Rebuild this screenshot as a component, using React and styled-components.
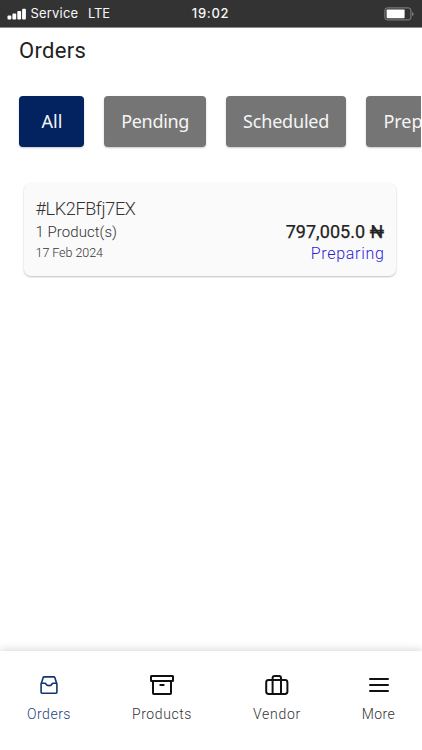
import React from "react";
import styled, { createGlobalStyle } from "styled-components";

const GlobalStyle = createGlobalStyle`
  * { box-sizing: border-box; }
  body { margin: 0; background: #fff; font-family: Roboto, "Noto Sans", sans-serif; }
`;

const Screen = styled.div`
  display: flex;
  flex-direction: column;
  width: 422px;
  height: 750px;
  overflow: hidden;
  background: #fff;
`;

const StatusBar = styled.header`
  display: grid;
  grid-template-columns: 1fr auto 1fr;
  align-items: center;
  flex: none;
  height: 28px;
  padding: 0 8px 0 7px;
  background: #333;
  border-bottom: 1px solid #8a8a8a;
  color: #f7f7f7;
  font: 500 13px/27px Inter, sans-serif;
`;

const Carrier = styled.div`
  display: flex;
  align-items: center;
  font-weight: 400;
  letter-spacing: 0.2px;
`;

const SignalIcon = styled.svg`
  width: 19px;
  height: 12px;
  margin-right: 4.5px;
`;

const Network = styled.span`
  margin-left: 9.5px;
  letter-spacing: -0.1px;
`;

const Clock = styled.div`
  letter-spacing: 0.7px;
`;

const BatteryIcon = styled.svg`
  justify-self: end;
  width: 30px;
  height: 14px;
`;

const Title = styled.h1`
  flex: none;
  margin: 9px 0 0 19px;
  color: #222;
  font-size: 22px;
  font-weight: 400;
  line-height: 28px;
  letter-spacing: 0.3px;
`;

const Filters = styled.div`
  display: flex;
  flex: none;
  gap: 20px;
  width: 421px;
  margin-top: 27px;
  padding: 4.4px 0 8px 19.4px;
  overflow: hidden;
`;

const Chip = styled.button`
  flex: none;
  width: ${(p) => p.$width}px;
  height: 51px;
  padding: 0 0 1px;
  border: 0;
  border-radius: 4px;
  background: ${(p) => (p.$active ? "#032360" : "#757575")};
  box-shadow: 0 1px 2px rgba(0, 0, 0, 0.22);
  color: #f5f5f5;
  font: 400 18px/26px "Noto Sans", sans-serif;
  letter-spacing: ${(p) => p.$spacing || 0}px;
`;

const OrderCard = styled.article`
  display: flex;
  justify-content: space-between;
  flex: none;
  width: 372.5px;
  height: 92.5px;
  margin: 28px 0 0 23.5px;
  padding: 13.6px 12px 0;
  border-radius: 7px;
  background: #fafafa;
  box-shadow: 0 1px 2px rgba(0, 0, 0, 0.25);
  color: #333;
`;

const Details = styled.div`
  display: flex;
  flex-direction: column;
`;

const OrderId = styled.div`
  font-size: 18px;
  font-weight: 300;
  line-height: 23px;
  letter-spacing: -0.35px;
`;

const ProductCount = styled.div`
  margin-top: 1px;
  font-size: 15px;
  font-weight: 300;
  line-height: 22px;
  letter-spacing: 0.05px;
`;

const OrderDate = styled.time`
  font-size: 12.5px;
  font-weight: 300;
  line-height: 20px;
  letter-spacing: -0.05px;
`;

const Summary = styled.div`
  display: flex;
  flex-direction: column;
  align-items: flex-end;
  padding-top: 23px;
`;

const Price = styled.div`
  color: #222;
  font-size: 18px;
  font-weight: 400;
  line-height: 23px;
  letter-spacing: 0.05px;
  -webkit-text-stroke: 0.25px #222;
`;

const Status = styled.div`
  margin-right: -0.6px;
  color: #2a1cd5;
  font-size: 16px;
  font-weight: 300;
  line-height: 22px;
  letter-spacing: 0.7px;
`;

const Navigation = styled.nav`
  display: flex;
  flex: none;
  height: 99.5px;
  margin-top: auto;
  padding-top: 21.5px;
  background: #fff;
  box-shadow: 0 -1px 8px rgba(0, 0, 0, 0.17);
`;

const NavItem = styled.a`
  display: flex;
  flex-direction: column;
  align-items: center;
  flex: none;
  width: ${(p) => p.$width}px;
  color: ${(p) => (p.$active ? "#123574" : "#111")};
`;

const NavIcon = styled.svg`
  width: 26px;
  height: 26px;
  fill: none;
  stroke: currentColor;
  stroke-width: ${(p) => p.$stroke || 2};
  stroke-linecap: round;
  stroke-linejoin: round;
`;

const NavLabel = styled.span`
  margin-top: 5px;
  color: ${(p) => (p.$active ? "#24427c" : "#333")};
  font-size: 14px;
  font-weight: 300;
  line-height: 22px;
  letter-spacing: ${(p) => p.$spacing}px;
`;

export default function App() {
  return (
    <>
      <GlobalStyle />
      <Screen>
        <StatusBar>
          <Carrier>
            <SignalIcon viewBox="0 0 19 12" fill="#fff">
              <rect x="0.5" y="7.5" width="3.8" height="4" rx="1" />
              <rect x="5.4" y="5.5" width="3.8" height="6" rx="1" />
              <rect x="10.3" y="3" width="3.8" height="8.5" rx="1" />
              <rect x="15.1" y="0.7" width="3.8" height="10.8" rx="1" />
            </SignalIcon>
            Service <Network>LTE</Network>
          </Carrier>
          <Clock>19:02</Clock>
          <BatteryIcon viewBox="0 0 30 14">
            <rect x="0.9" y="0.9" width="26" height="12" rx="2.4" fill="none" stroke="#888" />
            <rect x="2.6" y="2.6" width="18" height="8.6" rx="0.7" fill="#fff" />
            <path d="M28.2 5q1.4.4 1.4 2t-1.4 2z" fill="#888" />
          </BatteryIcon>
        </StatusBar>

        <Title>Orders</Title>

        <Filters>
          <Chip $active $width={65}>All</Chip>
          <Chip $width={101.5} $spacing={-0.3}>Pending</Chip>
          <Chip $width={120.5} $spacing={-0.2}>Scheduled</Chip>
          <Chip $width={117} $spacing={-0.1}>Preparing</Chip>
        </Filters>

        <OrderCard>
          <Details>
            <OrderId>#LK2FBfj7EX</OrderId>
            <ProductCount>1 Product(s)</ProductCount>
            <OrderDate>17 Feb 2024</OrderDate>
          </Details>
          <Summary>
            <Price>797,005.0 ₦</Price>
            <Status>Preparing</Status>
          </Summary>
        </OrderCard>

        <Navigation>
          <NavItem $active $width={98}>
            <NavIcon viewBox="0 0 26 26" $stroke={1.6}>
              <path d="M5.1 12.3 7.2 5.6Q7.4 4.9 8.1 4.9H17.9Q18.6 4.9 18.8 5.6L20.9 12.3V20.3Q20.9 21.2 20 21.2H6Q5.1 21.2 5.1 20.3ZM5.1 11.3H8.8Q9.7 11.3 10 12.1Q10.6 13.6 13 13.6T16 12.1Q16.3 11.3 17.2 11.3H20.9" />
            </NavIcon>
            <NavLabel $active $spacing={0.5}>Orders</NavLabel>
          </NavItem>
          <NavItem $width={128}>
            <NavIcon viewBox="0 0 26 26">
              <rect x="2" y="4" width="22" height="5" rx="0.5" />
              <path d="M4 9.2V21.2Q4 22 4.8 22H21.2Q22 22 22 21.2V9.2M11.3 13H14.7" />
            </NavIcon>
            <NavLabel $spacing={0.6}>Products</NavLabel>
          </NavItem>
          <NavItem $width={102}>
            <NavIcon viewBox="0 0 26 26">
              <rect x="2.2" y="8" width="21.2" height="14" rx="2.4" />
              <path d="M8.6 22V6Q8.6 4 10.6 4H15Q17 4 17 6V22" />
            </NavIcon>
            <NavLabel $spacing={0.7}>Vendor</NavLabel>
          </NavItem>
          <NavItem $width={101}>
            <NavIcon viewBox="0 0 26 26">
              <path d="M4 7H22M4 13H22M4 19H22" />
            </NavIcon>
            <NavLabel $spacing={0.4}>More</NavLabel>
          </NavItem>
        </Navigation>
      </Screen>
    </>
  );
}
